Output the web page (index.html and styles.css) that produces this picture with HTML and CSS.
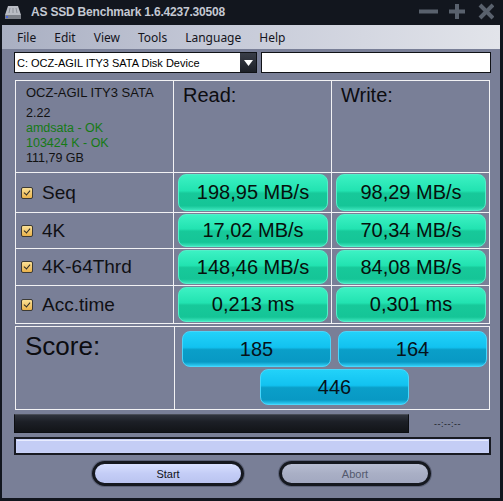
FILE: index.html
```html
<!DOCTYPE html>
<html lang="en">
<head>
  <meta charset="UTF-8">
  <link rel="stylesheet" href="styles.css">
</head>
<body>
  <div class="window">
    <div class="titlebar">
      <svg class="app-icon" width="18" height="16" viewBox="0 0 18 16">
        <polygon points="1,11 4,2 14,2 17,11" fill="#b9bcc4"/>
        <line x1="6" y1="4" x2="5" y2="9" stroke="#8c9098" stroke-width="1"/>
        <line x1="9" y1="4" x2="9" y2="9" stroke="#8c9098" stroke-width="1"/>
        <line x1="12" y1="4" x2="13" y2="9" stroke="#8c9098" stroke-width="1"/>
        <rect x="1" y="11" width="16" height="4" fill="#7c8088"/>
        <rect x="2" y="12" width="2" height="2" fill="#4a66d8"/>
      </svg>
      <span class="title">AS SSD Benchmark 1.6.4237.30508</span>
      <svg class="controls" width="80" height="20" viewBox="0 0 80 20">
        <line x1="5" y1="9.5" x2="24" y2="9.5" stroke="#59616d" stroke-width="4"/>
        <line x1="35" y1="9.5" x2="51" y2="9.5" stroke="#59616d" stroke-width="4"/>
        <line x1="43" y1="2" x2="43" y2="17" stroke="#59616d" stroke-width="4"/>
        <line x1="66" y1="3" x2="79" y2="16" stroke="#59616d" stroke-width="4"/>
        <line x1="79" y1="3" x2="66" y2="16" stroke="#59616d" stroke-width="4"/>
      </svg>
    </div>
    <div class="client">
      <div class="menubar">
        <span class="menu-item">File</span>
        <span class="menu-item">Edit</span>
        <span class="menu-item">View</span>
        <span class="menu-item">Tools</span>
        <span class="menu-item">Language</span>
        <span class="menu-item">Help</span>
      </div>
      <div class="content">
        <div class="drive-row">
          <div class="combo">
            <span class="combo-text">C: OCZ-AGIL ITY3 SATA Disk Device</span>
            <span class="combo-arrow">
              <svg width="9" height="6" viewBox="0 0 9 6"><polygon points="0,0 9,0 4.5,6" fill="#fff"/></svg>
            </span>
          </div>
          <div class="path-box"></div>
        </div>

        <div class="results">
          <div class="cell info">
            <div class="drive-name">OCZ-AGIL ITY3 SATA</div>
            <div>2.22</div>
            <div class="ok">amdsata - OK</div>
            <div class="ok">103424 K - OK</div>
            <div>111,79 GB</div>
          </div>
          <div class="cell head">Read:</div>
          <div class="cell head">Write:</div>

          <div class="cell label"><span class="check"></span>Seq</div>
          <div class="cell value"><div class="pill green">198,95 MB/s</div></div>
          <div class="cell value"><div class="pill green">98,29 MB/s</div></div>

          <div class="cell label"><span class="check"></span>4K</div>
          <div class="cell value"><div class="pill green">17,02 MB/s</div></div>
          <div class="cell value"><div class="pill green">70,34 MB/s</div></div>

          <div class="cell label"><span class="check"></span>4K-64Thrd</div>
          <div class="cell value"><div class="pill green">148,46 MB/s</div></div>
          <div class="cell value"><div class="pill green">84,08 MB/s</div></div>

          <div class="cell label"><span class="check"></span>Acc.time</div>
          <div class="cell value"><div class="pill green">0,213 ms</div></div>
          <div class="cell value"><div class="pill green">0,301 ms</div></div>
        </div>

        <div class="score">
          <div class="cell score-label">Score:</div>
          <div class="cell score-values">
            <div class="pill blue">185</div>
            <div class="pill blue">164</div>
            <div class="pill blue total">446</div>
          </div>
        </div>

        <div class="progress-row">
          <div class="bar-dark"></div>
          <span class="time">--:--:--</span>
        </div>
        <div class="bar-light"><div class="bar-fill"></div></div>

        <div class="buttons">
          <div class="btn start">Start</div>
          <div class="btn abort">Abort</div>
        </div>
      </div>
    </div>
  </div>
</body>
</html>
```

FILE: styles.css
```css
html, body {
  margin: 0;
  width: 503px;
  height: 501px;
  overflow: hidden;
  background: #12161e;
}

.window {
  width: 503px;
  height: 501px;
  display: flex;
  flex-direction: column;
  background: #12161e;
  font-family: "Liberation Sans", Arial, sans-serif;
}

.titlebar {
  height: 25px;
  display: flex;
  align-items: center;
  padding-left: 4px;
  box-sizing: border-box;
}

.app-icon {
  margin-top: -2px;
}

.title {
  margin-left: 9px;
  margin-top: -2px;
  color: #c4c8d2;
  font-weight: bold;
  font-size: 12px;
  letter-spacing: -0.2px;
}

.controls {
  margin-left: auto;
  margin-right: 9px;
  margin-top: -2px;
}

.client {
  flex: 1;
  margin: 0 3px 3px 2px;
  background: #797f97;
  display: flex;
  flex-direction: column;
}

.menubar {
  height: 24px;
  display: flex;
  align-items: center;
  padding-left: 6px;
  background: linear-gradient(to right, #a9afc2 0%, #c6cad8 45%, #e2e4ea 100%);
  font-family: "Noto Sans", sans-serif;
  font-size: 12px;
  color: #14141c;
}

.menu-item {
  padding: 0 9px;
}

.content {
  padding: 3px 0 0 12px;
}

.drive-row {
  display: flex;
  gap: 4px;
  height: 21px;
}

.combo {
  width: 243px;
  box-sizing: border-box;
  border: 1px solid #101216;
  background: #fff;
  display: flex;
  align-items: center;
}

.combo-text {
  flex: 1;
  padding-left: 2px;
  font-size: 11px;
  color: #000;
}

.combo-arrow {
  width: 16px;
  height: 19px;
  background: linear-gradient(#3a3e48, #1c1f26);
  display: flex;
  align-items: center;
  justify-content: center;
}

.path-box {
  width: 230px;
  box-sizing: border-box;
  border: 1px solid #101216;
  background: #fff;
}

.results {
  margin: 7px 0 0 1px;
  width: 475px;
  box-sizing: border-box;
  display: grid;
  grid-template-columns: 157px 157px 157px;
  grid-template-rows: 91px 39px 35px 36px 37px;
  gap: 1px;
  padding: 1px;
  background: #f2f2f4;
}

.cell {
  background: #797f97;
  box-sizing: border-box;
}

.info {
  padding: 4px 0 0 10px;
  font-size: 12.5px;
  line-height: 15px;
  color: #111;
}

.info .drive-name {
  font-size: 13px;
  margin-bottom: 6px;
}

.info .ok {
  color: #157a15;
}

.head {
  padding: 3px 0 0 9px;
  font-size: 20px;
  color: #0c0c10;
}

.label {
  display: flex;
  align-items: center;
  padding-left: 5px;
  font-size: 19px;
  color: #101014;
}

.check {
  width: 10px;
  height: 10px;
  margin-right: 9px;
  border: 1px solid #3c3a34;
  border-radius: 2px;
  background: linear-gradient(#fbe196, #eab24a);
  position: relative;
}

.check::after {
  content: "";
  position: absolute;
  left: 3px;
  top: 1px;
  width: 3px;
  height: 5px;
  border: solid #2c2a28;
  border-width: 0 1.5px 1.5px 0;
  transform: rotate(40deg);
}

.value {
  padding: 1px 3px 1px 4px;
  display: flex;
}

.pill {
  flex: 1;
  display: flex;
  align-items: center;
  justify-content: center;
  border-radius: 8px;
  font-size: 20px;
  color: #06100c;
  box-sizing: border-box;
}

.green {
  border: 1px solid #54efc9;
  background: linear-gradient(#3cf1c3 0%, #22e3b1 45%, #17c99a 52%, #15c597 88%, #3be4bb 100%);
}

.score {
  margin: 2px 0 0 1px;
  width: 475px;
  box-sizing: border-box;
  display: grid;
  grid-template-columns: 158px 314px;
  grid-template-rows: 82px;
  gap: 1px;
  padding: 1px;
  background: #f2f2f4;
}

.score-label {
  padding: 4px 0 0 9px;
  font-size: 26px;
  color: #0c0c10;
}

.score-values {
  display: grid;
  grid-template-columns: 149px 149px;
  grid-template-rows: 36px 36px;
  column-gap: 7px;
  row-gap: 2px;
  padding: 4px 0 0 7px;
}

.blue {
  border: 1px solid #4ad6fb;
  background: linear-gradient(#22d2f9 0%, #12c2f0 45%, #0a9fc9 52%, #0899c4 88%, #2fcdf5 100%);
  font-size: 20px;
  color: #06121a;
}

.total {
  grid-column: 1 / 3;
  justify-self: center;
  width: 149px;
}

.progress-row {
  margin-top: 4px;
  display: flex;
  align-items: center;
}

.bar-dark {
  width: 395px;
  height: 19px;
  box-sizing: border-box;
  border: 1px solid #0c0e12;
  border-top-color: #4a4e58;
  background: linear-gradient(#30343e, #1c1f26 40%, #121418);
}

.time {
  margin-left: 25px;
  font-size: 9px;
  color: #1a1c24;
  letter-spacing: 0.5px;
}

.bar-light {
  margin-top: 4px;
  width: 477px;
  height: 18px;
  box-sizing: border-box;
  border: 2px solid #181a22;
  background: #c8d1f7;
  padding: 1px;
}

.bar-fill {
  height: 100%;
  border-top: 1px solid #e8ecff;
  box-sizing: border-box;
  background: #c4cdf5;
}

.buttons {
  margin-top: 6px;
  display: flex;
  gap: 35px;
  padding-left: 78px;
}

.btn {
  width: 152px;
  height: 25px;
  box-sizing: border-box;
  border: 3px solid #15181f;
  border-radius: 13px;
  display: flex;
  align-items: center;
  justify-content: center;
  font-size: 11px;
  box-shadow: 0 0 0 1px #5c6278;
}

.start {
  background: linear-gradient(#d8e0ff, #c4cdf6 50%, #bac4f0);
  color: #10121a;
}

.abort {
  background: linear-gradient(#b8bed2, #a9afc5 50%, #a2a8c0);
  color: #545a6e;
}
```
